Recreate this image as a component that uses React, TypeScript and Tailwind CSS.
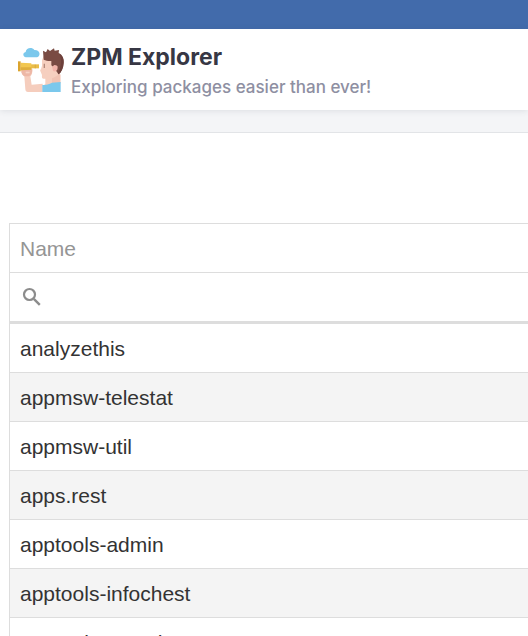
const packages = [
  "analyzethis",
  "appmsw-telestat",
  "appmsw-util",
  "apps.rest",
  "apptools-admin",
  "apptools-infochest",
  "apptools-growth",
];

function Logo() {
  return (
    <svg className="h-12 w-12 shrink-0" viewBox="21 27 144 144" aria-hidden="true">
      {/* cloud */}
      <path d="M48 58C38 57 37 44 47 42C48 29 66 26 73 36C82 35 91 42 88 51C87 56 83 58 78 58Z" fill="#7bc8ec" />
      {/* raised arm */}
      <path d="M34 91L66 91L67 98C67 107 64 112 61 115L65 140L98 137L98 162L54 162C49 162 46 159 46 154L43 115C37 111 34 106 34 98Z" fill="#f5cdbd" />
      <path d="M34 94H67C67 105 63 112 57 115H43C37 111 34 105 34 98Z" fill="#edb7a6" />
      <path d="M47 101H59V106H47Z" fill="#f7d3c5" />
      {/* head and neck */}
      <path d="M101 54L130 50L148 78L148 106L151 110L151 136L97 145L106 138L106 122H101C96 122 95 118 96 111L91 99C90 97 91 95 93 93L96 83L96 66Z" fill="#f6cfbf" />
      <path d="M126 121C134 119 141 115 148 106L151 110V136H126Z" fill="#f1c3b3" />
      {/* shirt */}
      <path d="M97 141C108 141 118 138 126 134L152 132V162H97Z" fill="#7bc8ec" />
      {/* hair */}
      <path d="M101 65L99 38L108 43L113 33L120 39L132 31L134 38L147 36L146 45C157 50 162 61 161 74C160 91 154 102 146 109L138 98L142 84L132 82L130 87L124 82V69C116 70 108 68 101 65Z" fill="#7a4b43" />
      <path d="M148 47C157 52 162 62 161 74C160 91 154 102 146 109L143 105C154 87 157 65 148 47Z" fill="#6d403b" />
      <path d="M127 88C130 79 143 81 143 89C142 97 136 103 129 99Z" fill="#f3b4aa" />
      <path d="M101 77H105V90H101Z" fill="#b58a7b" />
      {/* spyglass */}
      <path d="M62 79H87V91H62Z" fill="#e9bd49" />
      <path d="M32 74L64 76V95L32 97Z" fill="#f2c750" />
      <path d="M24 70H32V100H24Z" fill="#dba42e" />
      <path d="M32 88H64V95L32 97ZM74 80H78V91H74Z" fill="#dfae3e" />
    </svg>
  );
}

function SearchIcon() {
  return (
    <svg className="h-6 w-6 shrink-0" viewBox="0 0 24 24" fill="none" stroke="#8c8c8c" aria-hidden="true">
      <circle cx="9.500" cy="9.500" r="5.500" strokeWidth="2.200" />
      <path d="M13.800 13.800L19.800 19.800" strokeWidth="2.400" />
    </svg>
  );
}

export default function App() {
  return (
    <div className="flex h-screen flex-col overflow-hidden bg-white">
      <div className="h-[29px] shrink-0 bg-[#426bab]" />
      <header className="relative flex h-[81px] shrink-0 items-center gap-[6px] px-[17px] pt-[2px] font-['Inter',sans-serif] shadow-[0_1px_6px_rgba(60,64,80,0.12)]">
        <Logo />
        <div>
          <h1 className="text-[23px] leading-8 font-bold text-[#373744]">ZPM Explorer</h1>
          <p className="text-[17px] leading-7 font-medium text-[#8e8fa2]">Exploring packages easier than ever!</p>
        </div>
      </header>
      <div className="h-[23px] shrink-0 border-b border-[#e2e4e7] bg-[#f4f5f7]" />
      <main className="pt-[90px] pl-[9px]">
        <table className="w-full border-separate border-spacing-0 border-t border-l border-[#dddddd] text-left font-['Liberation_Sans',Arial,sans-serif] text-[21px] leading-6 text-[#333333]">
          <thead>
            <tr>
              <th scope="col" className="h-[49px] border-b border-[#dddddd] px-[10px] pt-[2px] pb-0 font-normal text-[#959595]">
                Name
              </th>
            </tr>
            <tr>
              <td className="h-[51px] border-b-3 border-[#dddddd] px-[10px] py-0">
                <label className="flex items-center gap-2">
                  <SearchIcon />
                  <input type="text" aria-label="Filter by name" className="h-6 w-full min-w-0 bg-transparent outline-none" />
                </label>
              </td>
            </tr>
          </thead>
          <tbody>
            {packages.map((name) => (
              <tr key={name} className="even:bg-[#f4f4f4]">
                <td className="h-[49px] border-b border-[#dddddd] px-[10px] pt-[2px] pb-0">{name}</td>
              </tr>
            ))}
          </tbody>
        </table>
      </main>
    </div>
  );
}
